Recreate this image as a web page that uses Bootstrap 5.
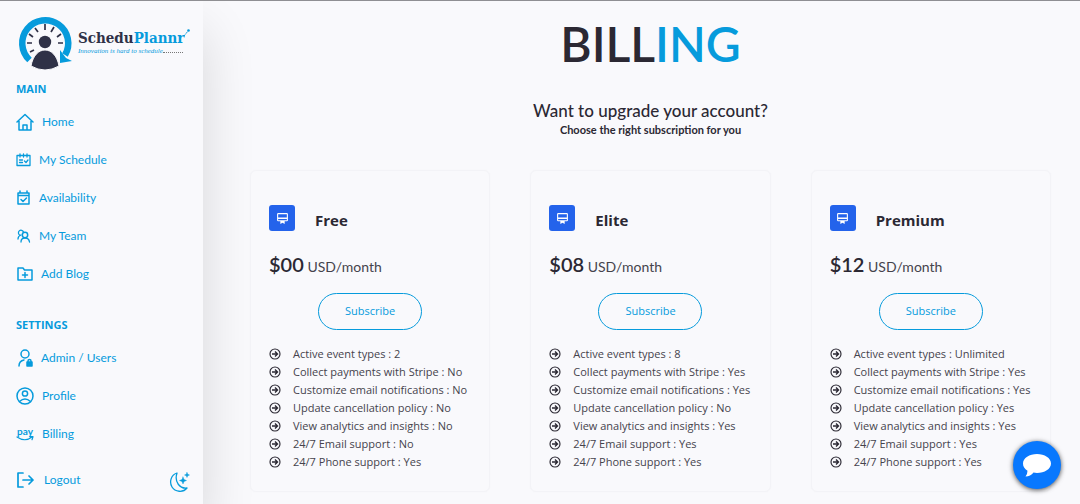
<!DOCTYPE html>
<html lang="en">
<head>
<meta charset="utf-8">
<meta name="viewport" content="width=device-width, initial-scale=1">
<title>ScheduPlannr - Billing</title>
<link rel="stylesheet" href="https://cdn.jsdelivr.net/npm/bootstrap@5.3.0/dist/css/bootstrap.min.css">
<style>
:root{--brand:#069bdc;--ink:#2b2833}
body{background:#f9f9fc;color:var(--ink);font-family:"Open Sans","Noto Sans",sans-serif;border-top:1px solid #8f8f93}
.sidebar{width:203px;padding:14px 12px 0 16px;background:#f9f9fc;box-shadow:0 30px 50px rgba(0,0,0,.14);font-family:Lato,sans-serif;min-height:calc(100vh - 1px)}
.logo{margin-left:2px;height:56px;color:#2f3147}
.brand-block{margin:14px 0 0 4px}
.brand-name{font:bold 15px/18px "DejaVu Serif Condensed","DejaVu Serif",serif;color:#2f3147}
.brand-name span,.tagline{color:var(--brand)}
.tagline{font:italic 7px/8px "Liberation Serif",serif;white-space:nowrap;width:105px}
.tagline i{flex:1;border-bottom:1px dotted #777;height:6px}
.side-title{font:bold 11px/16px "Open Sans",sans-serif;color:var(--brand);margin:10px 0 6px}
.side-link{height:38px;font-size:12px;color:var(--brand);text-decoration:none;white-space:nowrap}
.side-link svg,.theme-btn svg{fill:none;stroke:currentColor;stroke-width:1.5;stroke-linecap:round;stroke-linejoin:round;flex:none}
.side-link .pay-mark{width:18px;line-height:9px;font-size:10px;font-weight:bold}
.theme-btn{color:var(--brand);border:0;background:none;line-height:0}
.content{padding:15px 29px 12px 47px}
.page-title{font:600 48px/56px Lato,sans-serif;margin:0}
.page-title span{color:var(--brand)}
.lead-line{font:500 17px/22px Lato,sans-serif;margin:28px 0 0}
.sub-line{font:bold 11px/16px Lato,sans-serif;margin:0 0 32px}
.plans{--bs-gutter-x:40px}
.plan{background:#f9f9fc;border:1px solid #f3f3f7;border-radius:6px;padding:34px 18px 20px;box-shadow:0 0 3px rgba(0,0,0,.02)}
.plan-icon{width:26px;height:26px;background:#2463eb;border-radius:3px}
.plan-name{font:bold 15px/20px "Open Sans",sans-serif;margin:5px 0 0}
.price{font:14px/28px Lato,sans-serif;color:#45434c;margin:19px 0 12px}
.price strong{font-size:20px;color:var(--ink);font-weight:600}
.subscribe{height:37px;width:104px;border:1px solid var(--brand);border-radius:19px;color:var(--brand);font-size:11px;padding:0}
.subscribe:hover{background:var(--brand);color:#fff}
.features{margin:15px 0 0;font-size:11px;line-height:18px;color:#45434c;white-space:nowrap}
.features svg{flex:none;color:var(--ink)}
.chat{width:48px;height:48px;right:19px;bottom:15px;border:0;border-radius:50%;background:#0878fe;box-shadow:0 1px 5px rgba(0,0,0,.7)}
</style>
</head>
<body>
<svg class="d-none" aria-hidden="true">
  <symbol id="arrow" viewBox="0 0 24 24"><circle cx="12" cy="12" r="10" fill="none" stroke="currentColor" stroke-width="2.3"/><path d="M6 12h10M12 7l5 5-5 5" fill="none" stroke="currentColor" stroke-width="2.8"/></symbol>
  <symbol id="plan" viewBox="0 0 24 24"><path fill="#fff" d="M20 2H4a2 2 0 0 0-2 2v11a2 2 0 0 0 2 2h4v5l4-2 4 2v-5h4a2 2 0 0 0 2-2V4a2 2 0 0 0-2-2zm0 13H4v-2h16zm0-5H4V4h16z"/></symbol>
</svg>
<div class="d-flex overflow-hidden">
  <nav class="sidebar d-flex flex-column flex-shrink-0" aria-label="Main">
    <a href="#" class="logo d-flex text-decoration-none" aria-label="ScheduPlannr">
      <svg width="56" height="56" viewBox="0 0 56 56" class="flex-shrink-0">
        <path d="M11.500 45A23 23 0 1 1 47 40" fill="none" stroke="#069bdc" stroke-width="6.500"/>
        <path d="M42 35v13l12-2-6-3z" fill="#069bdc"/>
        <path d="M9 28h5M12 37l4-2M11 19l4 3M17 13l3 4M27 9v6M36 12l-3 5M43 19l-4 3M45 28h-5" stroke="#2f3147" stroke-width="1.700"/>
        <circle cx="27" cy="27" r="6.200" fill="#2f3147"/><path d="M13 51C15 40 21 35 27 35s12 5 14 16q-14 8-28 0z" fill="#2f3147" stroke="#f9f9fc"/>
      </svg>
      <span class="brand-block d-flex flex-column">
        <span class="d-flex"><span class="brand-name">Schedu<span>Plannr</span></span><svg width="6" height="9" viewBox="0 0 6 9"><path d="M0 7l4-5" stroke="#069bdc" stroke-dasharray="2 1"/><circle cx="4.500" cy="1.500" r="1.300" fill="#069bdc"/></svg></span>
        <span class="tagline d-flex">Innovation is hard to schedule<i></i></span>
      </span>
    </a>
    <h2 class="side-title">MAIN</h2>
    <div class="d-flex flex-column mb-2">
      <a href="#" class="side-link d-flex align-items-center gap-2"><svg width="18" height="18" viewBox="0 0 18 18"><path d="M1 9l8-7.500L17 9M3 8v9h12V8M7 17v-5h4v5"/></svg>Home</a>
      <a href="#" class="side-link d-flex align-items-center gap-2"><svg width="15" height="14" viewBox="0 0 15 14"><path d="M1 2.500h13v10H1zM4 1v3M7.500 1v3M11 1v3M3.500 7h3M3.500 9.500h3M8.500 8l1.500 1.500L12 7" stroke-width="1.300"/></svg>My Schedule</a>
      <a href="#" class="side-link d-flex align-items-center gap-2"><svg width="15" height="16" viewBox="0 0 15 16"><path d="M2 3h11v11H2zM2 5.500h11M4 1v2M11 1v2M5 9.500l2 2 3.500-3.500"/></svg>Availability</a>
      <a href="#" class="side-link d-flex align-items-center gap-2"><svg width="15" height="14" viewBox="0 0 15 14"><circle cx="9" cy="6" r="2.700"/><path d="M5 13q0-4 4-4t4.500 4M7.500 3A2.600 2.600 0 1 0 4 6.200M2 10q0-3 3-4" stroke-width="1.300"/></svg>My Team</a>
      <a href="#" class="side-link d-flex align-items-center gap-2"><svg width="17" height="14" viewBox="0 0 17 14"><path d="M2 1h5l1.500 2H16v10H2zM6.500 8h5M9 5.500v5"/></svg>Add Blog</a>
    </div>
    <h2 class="side-title mt-3">SETTINGS</h2>
    <div class="d-flex flex-column mb-2">
      <a href="#" class="side-link d-flex align-items-center gap-2"><svg width="17" height="18" viewBox="0 0 17 18"><circle cx="9" cy="5" r="4"/><path d="M3 17q0-5 5-6M12 13v-1a1.500 1.500 0 0 1 3 0v1"/><path d="M11 13h5v4h-5z" fill="currentColor"/></svg>Admin / Users</a>
      <a href="#" class="side-link d-flex align-items-center gap-2"><svg width="18" height="18" viewBox="0 0 18 18"><circle cx="9" cy="9" r="8"/><circle cx="9" cy="6.500" r="2.600"/><path d="M3.500 14.500q5.500-5 11 0"/></svg>Profile</a>
      <a href="#" class="side-link d-flex align-items-center gap-2"><span class="pay-mark d-flex flex-column align-items-center">pay<svg width="18" height="5" viewBox="0 0 18 5"><path d="M1 1q8 5.500 15 0M14 .7h3l-1 3" stroke-width="1.200"/></svg></span>Billing</a>
    </div>
    <div class="d-flex justify-content-between align-items-center">
      <a href="#" class="side-link d-flex align-items-center gap-2"><svg width="20" height="18" viewBox="0 0 20 18"><path d="M7 2H2v14h5M7 9h10M13 5l4 4-4 4" stroke-width="1.700"/></svg>Logout</a>
      <button type="button" class="theme-btn p-0 pt-1" aria-label="Dark mode"><svg width="22" height="22" viewBox="0 0 22 22"><path d="M8 2C2 4 0 11 3 16s11 6 15 1C11 18 5 11 8 2z" stroke-width="1.300"/><path d="M14 6l1 2.500 2.500 1-2.500 1-1 2.500-1-2.500-2.500-1 2.500-1zM18 1.500l.7 1.800 1.800.7-1.800.7-.7 1.800-.7-1.800-1.800-.7 1.800-.7z" fill="currentColor" stroke-width=".4"/></svg></button>
    </div>
  </nav>
  <main class="content flex-grow-1">
    <header class="text-center">
      <h1 class="page-title">BILL<span>ING</span></h1>
      <p class="lead-line">Want to upgrade your account?</p>
      <p class="sub-line">Choose the right subscription for you</p>
    </header>
    <div class="row row-cols-3 plans" id="plans"></div>
  </main>
</div>
<button type="button" class="chat position-fixed p-0" aria-label="Open chat"><svg width="30" height="26" viewBox="0 0 30 26"><path d="M15 2C7.500 2 1 6 1 11.500c0 3 1.500 5.500 4.500 7.300Q5.500 22 3.500 24.500q5 0 8-3.900 1.500.4 3.500.4c7.500 0 14-4 14-9.500S22.500 2 15 2z" fill="#fff"/></svg></button>
<script src="https://cdn.jsdelivr.net/npm/bootstrap@5.3.0/dist/js/bootstrap.bundle.min.js"></script>
<script>
const labels = ['Active event types', 'Collect payments with Stripe', 'Customize email notifications', 'Update cancellation policy', 'View analytics and insights', '24/7 Email support', '24/7 Phone support'];
const plans = [
  ['Free', '$00', ['2', 'No', 'No', 'No', 'No', 'No', 'Yes']],
  ['Elite', '$08', ['8', 'Yes', 'Yes', 'No', 'Yes', 'Yes', 'Yes']],
  ['Premium', '$12', ['Unlimited', 'Yes', 'Yes', 'Yes', 'Yes', 'Yes', 'Yes']]
];
document.getElementById('plans').innerHTML = plans.map(([name, price, values]) => `
  <div class="col"><section class="plan">
    <div class="d-flex"><span class="plan-icon d-flex align-items-center justify-content-center me-3"><svg width="13" height="13"><use href="#plan"/></svg></span><h2 class="plan-name ms-1">${name}</h2></div>
    <p class="price"><strong>${price}</strong> USD/month</p>
    <div class="text-center"><button type="button" class="btn subscribe">Subscribe</button></div>
    <ul class="features list-unstyled">${labels.map((l, i) => `<li class="d-flex align-items-center"><svg class="me-2" width="12" height="12"><use href="#arrow"/></svg><span class="ms-1">${l} : ${values[i]}</span></li>`).join('')}</ul>
  </section></div>`).join('');
</script>
</body>
</html>
